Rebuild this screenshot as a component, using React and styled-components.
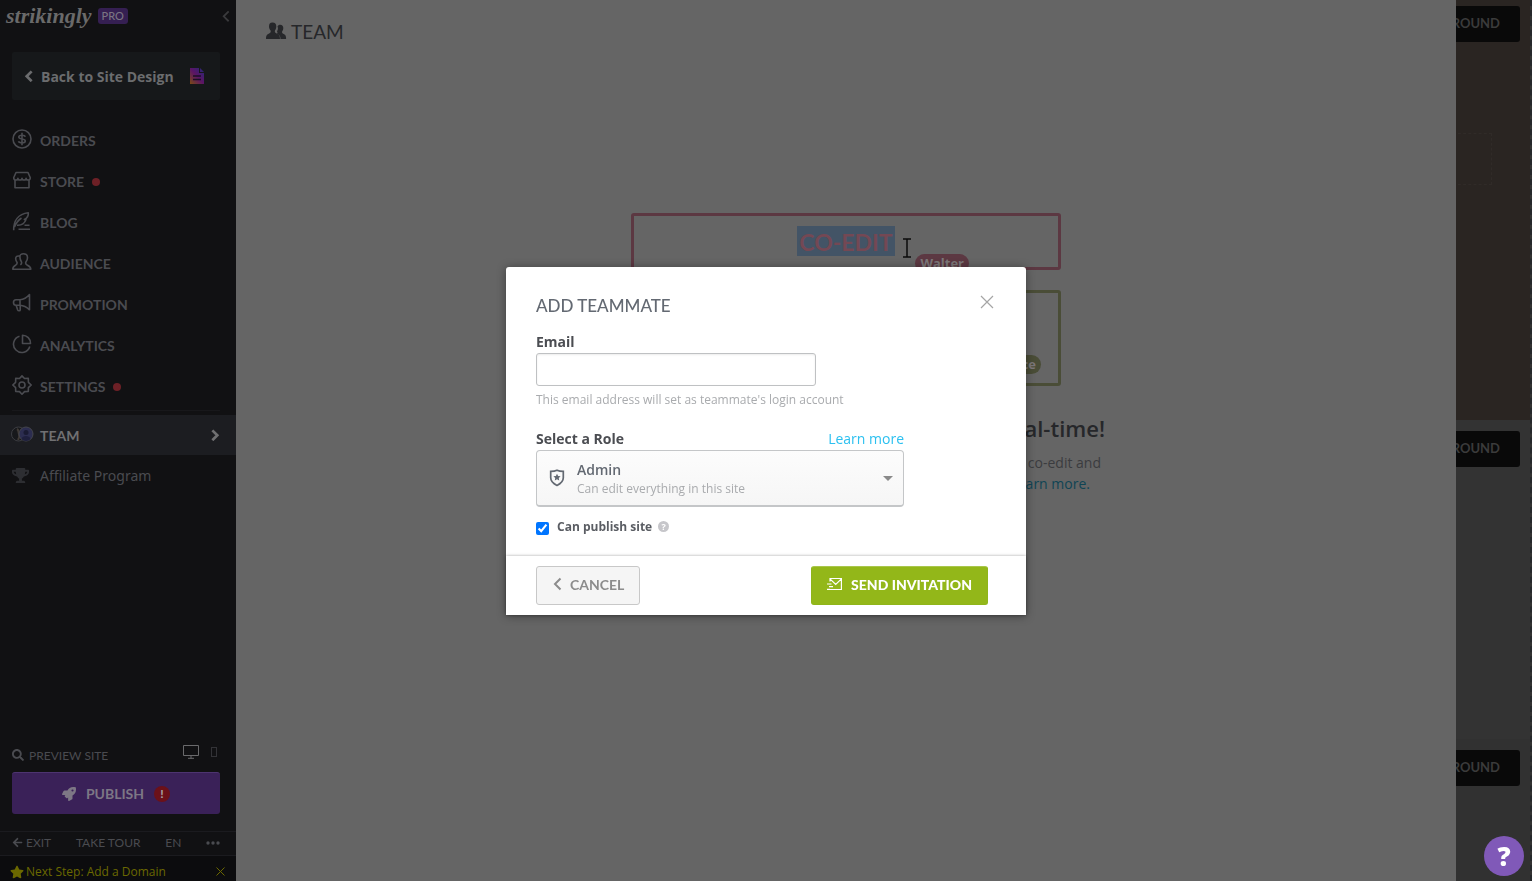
import React, { Component } from 'react';
import styled, { createGlobalStyle } from 'styled-components';
import {
  FaArrowLeft,
  FaRocket,
  FaSearch,
  FaStar,
  FaTrophy,
} from 'react-icons/fa';

const GlobalStyle = createGlobalStyle`
  * {
    box-sizing: border-box;
  }
  body {
    margin: 0;
    background: #656565;
    font-family: "Open Sans", "Noto Sans", sans-serif;
    font-size: 14px;
  }
  button, input, select {
    font-family: inherit;
    margin: 0;
  }
  a {
    color: inherit;
    text-decoration: none;
  }
`;

const brandFont = 'Lato, "Open Sans", sans-serif';

const Page = styled.div`
  display: flex;
  height: 100vh;
  overflow: hidden;
`;

/* ---------- sidebar ---------- */

const Sidebar = styled.aside`
  flex: 0 0 236px;
  display: flex;
  flex-direction: column;
  background: #111113;
  color: #4a4b50;
`;

const SidebarHeader = styled.header`
  display: flex;
  align-items: center;
  height: 32px;
  padding: 0 6px;
`;

const Logo = styled.a`
  font-family: "Liberation Serif", serif;
  font-size: 22px;
  font-weight: bold;
  font-style: italic;
  line-height: 28px;
  color: #6a6a6a;
`;

const ProBadge = styled.span`
  margin-left: 6px;
  padding: 0 4px;
  border-radius: 3px;
  background: #351f52;
  color: #7a7482;
  font-family: ${brandFont};
  font-size: 11px;
  font-weight: 500;
  line-height: 16px;
`;

const IconButton = styled.button`
  display: flex;
  padding: 0;
  border: 0;
  background: none;
  color: ${props => props.$color || 'inherit'};
  cursor: pointer;
`;

const CollapseButton = styled(IconButton)`
  margin-left: auto;
`;

const BackLink = styled.a`
  display: flex;
  align-items: center;
  gap: 8px;
  height: 48px;
  margin: 20px 16px 20px 12px;
  padding: 0 15px 0 12px;
  border-radius: 2px;
  background: #16181a;
  color: #6b6c6e;
  font-weight: 700;
`;

const BackText = styled.span`
  flex: 1;
  white-space: nowrap;
`;

const NavItem = styled.a`
  display: flex;
  align-items: center;
  gap: 8px;
  height: ${props => (props.$sub ? '40px' : '41px')};
  padding: 0 16px 0 12px;
  background: ${props => (props.$active ? '#1c1d21' : 'none')};
  color: ${props => (props.$active ? '#707072' : 'inherit')};
  font-family: ${props => (props.$plain ? '"Noto Sans", sans-serif' : brandFont)};
  font-size: 14px;
  font-weight: ${props => (props.$plain ? 400 : 700)};
  svg {
    flex: none;
  }
`;

const NavIcon = styled.svg`
  width: 20px;
  height: 20px;
  margin-bottom: 4px;
  fill: none;
  stroke: currentColor;
  stroke-width: 1.6;
  stroke-linejoin: round;
`;

const SubIcon = styled.span`
  display: flex;
  width: 20px;
  svg {
    margin-left: ${props => (props.$wide ? '-2px' : '0')};
  }
`;

const RedDot = styled.span`
  width: 8px;
  height: 8px;
  border-radius: 50%;
  background: #6d2026;
`;

const NavArrow = styled.span`
  display: flex;
  margin-left: auto;
`;

const Divider = styled.hr`
  width: 208px;
  margin: 3px 12px 4px;
  border: 0;
  border-top: 1px solid #18181b;
`;

const SidebarBottom = styled.div`
  margin-top: auto;
`;

const PreviewRow = styled.div`
  display: flex;
  align-items: center;
  gap: 5px;
  height: 34px;
  padding: 0 19px 0 12px;
  font-family: ${brandFont};
  font-size: 12px;
`;

const Devices = styled.div`
  display: flex;
  align-items: center;
  gap: 12px;
  margin-left: auto;
  padding-bottom: 6px;
`;

const PublishButton = styled.button`
  display: flex;
  align-items: center;
  justify-content: center;
  gap: 10px;
  width: 208px;
  height: 42px;
  margin: 0 12px 17px;
  border: 0;
  border-top: 1px solid #4d3470;
  border-radius: 3px;
  background: #3a2158;
  color: #7d7785;
  font-family: ${brandFont};
  font-size: 14px;
  font-weight: 700;
  cursor: pointer;
`;

const AlertBadge = styled.span`
  width: 16px;
  height: 16px;
  border-radius: 50%;
  background: #6b1119;
  color: #a39a9e;
  font-size: 12px;
  font-weight: 900;
  line-height: 16px;
`;

const FooterLinks = styled.div`
  display: flex;
  align-items: center;
  justify-content: space-between;
  height: 25px;
  padding: 0 16px 2px 12px;
  border-top: 1px solid #1b1b1f;
  border-bottom: 1px solid #1b1b1f;
  font-family: ${brandFont};
  font-size: 12px;
  a {
    display: flex;
    align-items: center;
    gap: 3px;
  }
`;

const NextStep = styled.div`
  display: flex;
  align-items: center;
  gap: 2px;
  height: 25px;
  padding: 6px 11px 0 10px;
  background: #0c0c0e;
  color: #6b6800;
  font-size: 12px;
  button {
    margin-left: auto;
  }
`;

/* ---------- team page ---------- */

const Main = styled.main`
  flex: 1;
  min-width: 0;
  display: flex;
  flex-direction: column;
  align-items: center;
  background: #656565;
`;

const PageTitle = styled.h1`
  display: flex;
  align-items: center;
  align-self: flex-start;
  gap: 4px;
  height: 62px;
  margin: 0 0 151px 29px;
  color: #26272a;
  font-family: ${brandFont};
  font-size: 19px;
  font-weight: 400;
`;

const EditBox = styled.div`
  position: relative;
  display: flex;
  justify-content: center;
  width: 430px;
  height: ${props => props.$height};
  margin-bottom: 20px;
  padding-top: 10px;
  border: 3px solid ${props => props.$color};
  border-radius: 3px;
`;

const Selected = styled.span`
  height: 30px;
  padding: 0 2px;
  background: #435466;
  color: #744854;
  font-family: ${brandFont};
  font-size: 23px;
  font-weight: 700;
  line-height: 32px;
`;

const NameTag = styled.span`
  position: absolute;
  right: ${props => props.$right};
  bottom: ${props => props.$bottom};
  padding: 0 5px;
  border-radius: 10px;
  background: ${props => props.$color};
  color: #7d787a;
  font-size: 13px;
  font-weight: 700;
  line-height: 19px;
`;

const Cursor = styled.svg`
  position: absolute;
  left: 268px;
  top: 22px;
`;

const Pitch = styled.section`
  width: 518px;
  margin-top: 6px;
  text-align: right;
  h2 {
    margin: 0 0 8px;
    color: #26272a;
    font-size: 22px;
    font-weight: 600;
    line-height: 32px;
  }
  p {
    margin: 0;
    padding-right: 4px;
    color: #3b3c3f;
    line-height: 21px;
  }
  p + p {
    padding-right: 15px;
  }
  a {
    color: #0f4454;
  }
`;

/* ---------- site preview, cut off by the team page ---------- */

const Preview = styled.div`
  flex: 0 0 76px;
  display: flex;
  flex-direction: column;
  overflow: hidden;
  border-right: 2px dashed #26292c;
  background: #333;
`;

const PreviewSection = styled.div`
  flex: 0 0 ${props => props.$height};
  display: flex;
  flex-direction: column;
  align-items: flex-end;
  padding: ${props => props.$top} 10px 0 0;
  background: ${props => props.$bg};
`;

const BackgroundButton = styled.button`
  height: 36px;
  padding: 0 20px 2px;
  border: 0;
  border-radius: 3px;
  background: #090909;
  color: #3b3b3b;
  font-family: ${brandFont};
  font-size: 13px;
  font-weight: 700;
`;

const Placeholder = styled.div`
  width: 60px;
  height: 52px;
  margin: 91px 28px 0 0;
  border: 1px dashed #302b28;
`;

const HelpButton = styled.button`
  position: fixed;
  right: 8px;
  bottom: 5px;
  width: 40px;
  height: 40px;
  padding: 0;
  border: 0;
  border-radius: 50%;
  background: #8059b8;
  color: #fff;
  font-size: 26px;
  font-weight: 800;
  line-height: 40px;
`;

/* ---------- dialog ---------- */

const Overlay = styled.div`
  position: fixed;
  inset: 0;
  display: flex;
  align-items: center;
  justify-content: center;
`;

const Dialog = styled.form`
  width: 520px;
  border-radius: 3px 3px 0 0;
  background: #fff;
  color: #4b4d52;
  box-shadow: 0 1px 10px rgba(0, 0, 0, 0.4);
`;

const DialogBody = styled.div`
  display: flex;
  flex-direction: column;
  align-items: flex-start;
  padding: 24px 30px 19px;
`;

const DialogHeader = styled.div`
  display: flex;
  align-items: flex-start;
  justify-content: space-between;
  width: 100%;
  padding: 4px 2px 14px 0;
`;

const DialogTitle = styled.h2`
  margin: 0;
  color: #636972;
  font-family: ${brandFont};
  font-size: 17px;
  font-weight: 500;
  line-height: 22px;
`;

const Label = styled.label`
  font-weight: 700;
  line-height: 22px;
`;

const EmailInput = styled.input`
  width: 280px;
  height: 33px;
  padding: 0 8px;
  border: 1px solid #bfc1c3;
  border-radius: 3px;
  box-shadow: inset 0 1px 2px rgba(0, 0, 0, 0.08);
`;

const Hint = styled.p`
  margin: 4px 0 18px;
  color: #a9abae;
  font-size: 12px;
  line-height: 20px;
`;

const RoleField = styled.div`
  width: 368px;
`;

const RoleLabels = styled.div`
  display: flex;
  justify-content: space-between;
  line-height: 22px;
  a {
    color: #2cc0f0;
  }
`;

const RoleBox = styled.div`
  position: relative;
  color: #636972;
`;

const RoleSelect = styled.select`
  display: block;
  width: 100%;
  height: 57px;
  padding: 8px 40px 24px 40px;
  border: 1px solid #c4c6c8;
  border-bottom: 2px solid #c4c6c8;
  border-radius: 4px;
  background: linear-gradient(#fcfcfc, #f6f6f6);
  color: inherit;
  font-size: 14px;
  font-weight: 600;
  appearance: none;
`;

const RoleText = styled.span`
  position: absolute;
  left: 41px;
  bottom: 9px;
  color: #a9abae;
  font-size: 12px;
  line-height: 18px;
  pointer-events: none;
`;

const ShieldIcon = styled.svg`
  position: absolute;
  left: 13px;
  top: 19px;
  pointer-events: none;
`;

const Caret = styled.svg`
  position: absolute;
  right: 11px;
  top: 26px;
  pointer-events: none;
`;

const PublishCheck = styled.div`
  display: flex;
  align-items: center;
  gap: 8px;
  margin-top: 10px;
  color: #5a5d63;
  font-size: 12px;
  line-height: 20px;
  input {
    width: 13px;
    height: 13px;
    margin-top: 3px;
    accent-color: #0075ff;
  }
  label {
    font-weight: 700;
  }
`;

const HelpDot = styled.span`
  width: 11px;
  height: 11px;
  margin-left: -2px;
  border-radius: 50%;
  background: #c6c6ca;
  color: #fff;
  font-size: 9px;
  font-weight: 700;
  line-height: 11px;
  text-align: center;
`;

const DialogFooter = styled.div`
  display: flex;
  align-items: center;
  justify-content: space-between;
  height: 59px;
  padding: 0 38px 0 30px;
  background: #fff;
  box-shadow: 0 0 3px rgba(0, 0, 0, 0.35);
`;

const DialogButton = styled.button`
  display: flex;
  align-items: center;
  gap: 8px;
  height: 39px;
  padding: 0 15px 2px;
  border: 1px solid ${props => (props.$primary ? '#8fb51a' : '#c8c8c8')};
  border-top-color: ${props => (props.$primary ? '#a9c64c' : '#c8c8c8')};
  border-radius: 3px;
  background: ${props => (props.$primary ? '#93b719' : '#f5f5f5')};
  color: ${props => (props.$primary ? '#fff' : '#8c8c8c')};
  font-family: ${brandFont};
  font-size: 14px;
  font-weight: ${props => (props.$primary ? 900 : 700)};
  cursor: pointer;
`;

const Chevron = ({ size, back, thickness }) => (
  <svg
    width={size}
    height={size * 1.4}
    viewBox="0 0 10 14"
    fill="none"
    stroke="currentColor"
    strokeWidth={thickness || 3}
  >
    <path d={back ? 'M8.500 1.500L3 7l5.500 5.500' : 'M1.500 1.500L7 7l-5.500 5.500'} />
  </svg>
);

const navItems = [
  {
    label: 'ORDERS',
    icon: (
      <>
        <circle cx="10" cy="10" r="9" />
        <path d="M13.300 7.800C13 6.700 11.800 6.200 10 6.200c-2 0-3.200.600-3.200 1.900S8 9.700 10 10s3.300.600 3.300 1.900-1.300 1.900-3.300 1.900-3.200-.500-3.500-1.500M10 3.800v12.400" />
      </>
    ),
  },
  {
    label: 'STORE',
    dot: true,
    icon: (
      <path d="M4 2.500h12l2.300 5.200c0 1.500-1 2.300-2.200 2.300s-2-.800-2-1.800c0 1-.900 1.800-2 1.800S10 9.200 10 8.200c0 1-.900 1.800-2 1.800s-2.100-.800-2.100-1.800c0 1-.900 1.800-2 1.800S1.700 9.200 1.700 7.700zM3 10.500v7.300h14v-7.300" />
    ),
  },
  {
    label: 'BLOG',
    icon: (
      <path d="M1.700 19.200C1.500 10 6 3 16.300 1.800c.300 3.500-1.300 5.500-4 6.700h1.700c-1.500 4-5 6-9 5.700M2.500 16C4 12 6.500 9 9.500 7M12.500 14.300h5M6.500 18.300H18" />
    ),
  },
  {
    label: 'AUDIENCE',
    icon: (
      <path d="M11.500 1.700c2.500 0 4 1.500 4 4 0 2-1 3.500-1.600 4.300-.5 1 0 2.300 1.200 3 2.500 1.200 3.700 1.800 3.700 4.300H9.500M8 4.500C7.800 2.900 9.300 1.700 11.500 1.700M8 4.300C5.200 3.400 3.500 4.700 3.700 7c.1 1.500.8 2.500 1.300 3.300.4 1.200-.2 2.200-1.500 2.900C1.500 14.200.8 15 .8 17.300H11M8 4.500c-.3 2.500.7 4.200 1.400 5.300.5 1.200 0 2.300-1 3" />
    ),
  },
  {
    label: 'PROMOTION',
    icon: (
      <path d="M17.500 1.500v15.300C14 13.500 11 12.500 8 12.300H4C2.300 12.300 1.500 11 1.500 9.500S2.300 6.800 4 6.800h4c3.500-.3 6.500-1.800 9.500-5.300zM8 6.800v5.500M4.200 12.500l1.500 4.500c.4 1 2.500 1 2.500 0v-4.700" />
    ),
  },
  {
    label: 'ANALYTICS',
    icon: (
      <>
        <path d="M7.500 2.200a8.300 8.300 0 1 0 10.300 10.300" />
        <path d="M10.500 1.200a8 8 0 0 1 8 8.300h-8z" />
      </>
    ),
  },
  {
    label: 'SETTINGS',
    dot: true,
    icon: (
      <>
        <path d="M10 .9l2.500 2.600 3.800-.1.100 3.900L19.200 10l-2.800 2.700-.1 3.800-3.800.100L10 19.200l-2.500-2.600-3.800-.100-.100-3.800L.800 10l2.800-2.700.100-3.900 3.800.100z" />
        <circle cx="10" cy="10" r="3" />
      </>
    ),
  },
];

class SidebarNav extends Component {
  render() {
    return (
      <nav>
        {navItems.map(item => (
          <NavItem key={item.label} href="#">
            <NavIcon viewBox="0 0 20 20">{item.icon}</NavIcon>
            {item.label}
            {item.dot && <RedDot />}
          </NavItem>
        ))}
        <Divider />
        <NavItem href="#" $sub $active>
          <SubIcon $wide>
            <svg width="24" height="18" viewBox="0 0 24 18">
              <circle cx="8.500" cy="8" r="7" fill="#17181b" stroke="#3c3d42" />
              <path d="M7 3c2 1 1 3 2 5s0 4-1 6" stroke="#403a36" strokeWidth="2" fill="none" />
              <circle cx="16" cy="8" r="7" fill="#2c2d50" stroke="#44454c" />
              <circle cx="16" cy="6.500" r="2.500" fill="#1a1b33" />
              <path d="M11.500 13c.5-4 8.500-4 9 0-2 2.500-7 2.500-9 0z" fill="#1e1f3d" />
            </svg>
          </SubIcon>
          TEAM
          <NavArrow>
            <Chevron size={9} />
          </NavArrow>
        </NavItem>
        <NavItem href="#" $sub $plain>
          <SubIcon>
            <FaTrophy size={17} color="#2d2e32" />
          </SubIcon>
          Affiliate Program
        </NavItem>
      </nav>
    );
  }
}

class AddTeammate extends Component {
  constructor(props) {
    super(props);
    this.state = {
      email: '',
      role: 'Admin',
      canPublish: true,
    };

    this.togglePublish = this.togglePublish.bind(this);
  }

  togglePublish() {
    this.setState({ canPublish: !this.state.canPublish });
  }

  render() {
    return (
      <Dialog role="dialog" aria-labelledby="dialog-title" onSubmit={e => e.preventDefault()}>
        <DialogBody>
          <DialogHeader>
            <DialogTitle id="dialog-title">ADD TEAMMATE</DialogTitle>
            <IconButton type="button" aria-label="Close" $color="#a5a5a5">
              <svg width="14" height="14" viewBox="0 0 14 14" stroke="currentColor" strokeWidth="1.200">
                <path d="M1 1l12 12M13 1L1 13" />
              </svg>
            </IconButton>
          </DialogHeader>
          <Label htmlFor="email">Email</Label>
          <EmailInput
            id="email"
            type="email"
            value={this.state.email}
            onChange={e => this.setState({ email: e.target.value })}
          />
          <Hint>This email address will set as teammate's login account</Hint>
          <RoleField>
            <RoleLabels>
              <Label htmlFor="role">Select a Role</Label>
              <a href="#">Learn more</a>
            </RoleLabels>
            <RoleBox>
              <RoleSelect
                id="role"
                value={this.state.role}
                onChange={e => this.setState({ role: e.target.value })}
              >
                <option>Admin</option>
              </RoleSelect>
              <ShieldIcon width="16" height="18" viewBox="0 0 16 18">
                <path
                  d="M8 1.200c2 .9 4 1.100 6.300 1.100v6.500c0 3.500-2.500 5.800-6.300 7.600-3.800-1.800-6.300-4.100-6.300-7.600V2.300C4 2.300 6 2.100 8 1.200z"
                  fill="none"
                  stroke="currentColor"
                  strokeWidth="1.700"
                />
                <path
                  d="M8 4.700l1.100 2.200 2.500.4-1.800 1.700.4 2.500L8 10.300l-2.200 1.200.4-2.500-1.800-1.700 2.500-.4z"
                  fill="currentColor"
                />
              </ShieldIcon>
              <RoleText>Can edit everything in this site</RoleText>
              <Caret width="10" height="5" viewBox="0 0 10 5">
                <path d="M0 0h10L5 5z" fill="#8a8a8a" />
              </Caret>
            </RoleBox>
          </RoleField>
          <PublishCheck>
            <input
              id="publish"
              type="checkbox"
              checked={this.state.canPublish}
              onChange={this.togglePublish}
            />
            <label htmlFor="publish">Can publish site</label>
            <HelpDot>?</HelpDot>
          </PublishCheck>
        </DialogBody>
        <DialogFooter>
          <DialogButton type="button">
            <Chevron size={10} back thickness={2} />
            CANCEL
          </DialogButton>
          <DialogButton type="submit" $primary>
            <svg width="16" height="14" viewBox="0 0 16 14" fill="none" stroke="currentColor" strokeWidth="1.200">
              <path d="M3 4.500V1.500h11.400v11H3M3 1.800l5.700 5.700 5.700-5.700M0 7h4.500M2 9.700h4M0 12.400h3" />
            </svg>
            SEND INVITATION
          </DialogButton>
        </DialogFooter>
      </Dialog>
    );
  }
}

export default class App extends Component {
  render() {
    return (
      <>
        <GlobalStyle />
        <Page>
          <Sidebar>
            <SidebarHeader>
              <Logo href="#">strikingly</Logo>
              <ProBadge>PRO</ProBadge>
              <CollapseButton aria-label="Collapse" $color="#3a3a3c">
                <Chevron size={9} back thickness={2} />
              </CollapseButton>
            </SidebarHeader>
            <BackLink href="#">
              <Chevron size={9} back />
              <BackText>Back to Site Design</BackText>
              <svg width="16" height="16" viewBox="0 0 16 16">
                <defs>
                  <linearGradient id="doc" x1="0" y1="1" x2="1" y2="0">
                    <stop offset="0" stopColor="#7a4a14" />
                    <stop offset="0.500" stopColor="#5b1466" />
                    <stop offset="1" stopColor="#232a78" />
                  </linearGradient>
                </defs>
                <path d="M1 0h9v5h5v11H1zM11 0l4 4h-4z" fill="url(#doc)" />
                <path d="M4 8h8M4 11.500h8" stroke="#1b0f26" strokeWidth="1.500" />
              </svg>
            </BackLink>
            <SidebarNav />
            <SidebarBottom>
              <PreviewRow>
                <FaSearch size={12} />
                PREVIEW SITE
                <Devices>
                  <svg width="16" height="14" viewBox="0 0 16 14" fill="none" stroke="#6a6a6c">
                    <path d="M.5.500h15v10H.500zM8 10.500v3M5 13.300h6" />
                  </svg>
                  <svg width="6" height="10" viewBox="0 0 6 10" fill="none" stroke="#333337">
                    <rect x=".5" y=".5" width="5" height="9" />
                  </svg>
                </Devices>
              </PreviewRow>
              <PublishButton>
                <FaRocket size={14} />
                PUBLISH
                <AlertBadge>!</AlertBadge>
              </PublishButton>
              <FooterLinks>
                <a href="#"><FaArrowLeft size={11} />EXIT</a>
                <a href="#">TAKE TOUR</a>
                <a href="#">EN</a>
                <IconButton aria-label="More">
                  <svg width="14" height="4" viewBox="0 0 14 4" fill="currentColor">
                    <circle cx="2" cy="2" r="1.700" />
                    <circle cx="7" cy="2" r="1.700" />
                    <circle cx="12" cy="2" r="1.700" />
                  </svg>
                </IconButton>
              </FooterLinks>
              <NextStep>
                <FaStar size={14} />
                <a href="#">Next Step: Add a Domain</a>
                <IconButton aria-label="Dismiss">
                  <svg width="9" height="9" viewBox="0 0 9 9" stroke="currentColor">
                    <path d="M.5.500l8 8M8.500.500l-8 8" />
                  </svg>
                </IconButton>
              </NextStep>
            </SidebarBottom>
          </Sidebar>
          <Main>
            <PageTitle>
              <svg width="22" height="18" viewBox="0 0 22 18" fill="currentColor">
                <path d="M12.500 4.500C13 3.300 14 2.700 15.300 2.700c1.900 0 3 1.300 3 3.200 0 1.600-.6 2.600-1.100 3.300-.4 1.200 0 2 .9 2.500 2 .9 3 1.600 3 5.300h-5.600c0-3-1-4-3.500-5.200.8-.8.500-1.500 0-2.500 1-1.500 1.300-3 .5-4.800z" />
                <path d="M7.500.500c2.500 0 3.800 1.500 3.800 3.900 0 1.900-.7 3.100-1.300 3.900-.5 1.600 0 2.400 1.200 2.900 2.800 1.200 3.800 2 3.800 5.800H1c0-3.800 1-4.600 3.500-5.800 1.200-.5 1.500-1.300 1-2.900C4.800 7.500 4 6.300 4 4.400 4 2 5 .500 7.500.500z" />
              </svg>
              TEAM
            </PageTitle>
            <EditBox $height="57px" $color="#5c3842">
              <Selected>CO-EDIT</Selected>
              <Cursor width="10" height="20" viewBox="0 0 10 20" fill="none" stroke="#0b0b0b" strokeWidth="1.500">
                <path d="M1 1h8M1 19h8M5 1v18" />
              </Cursor>
              <NameTag $right="89px" $bottom="-6px" $color="#5c3842">Walter</NameTag>
            </EditBox>
            <EditBox $height="96px" $color="#4a4d37">
              <NameTag $right="17px" $bottom="9px" $color="#4a4d37">Grace</NameTag>
            </EditBox>
            <Pitch>
              <h2>real-time!</h2>
              <p>co-edit and</p>
              <p><a href="#">Learn more.</a></p>
            </Pitch>
          </Main>
          <Preview>
            <PreviewSection $height="420px" $top="6px" $bg="#2a2522">
              <BackgroundButton>BACKGROUND</BackgroundButton>
              <Placeholder />
            </PreviewSection>
            <PreviewSection $height="319px" $top="11px" $bg="#333">
              <BackgroundButton>BACKGROUND</BackgroundButton>
            </PreviewSection>
            <PreviewSection $height="142px" $top="11px" $bg="#313131">
              <BackgroundButton>BACKGROUND</BackgroundButton>
            </PreviewSection>
          </Preview>
        </Page>
        <Overlay>
          <AddTeammate />
        </Overlay>
        <HelpButton aria-label="Help">?</HelpButton>
      </>
    );
  }
}
